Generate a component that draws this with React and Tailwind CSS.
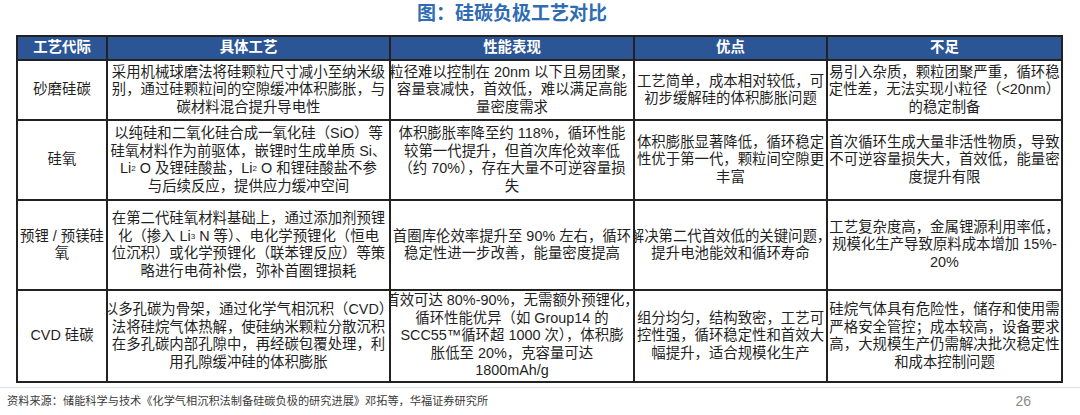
const Li = ({ n }) => (
  <>
    Li<span className="text-[8px] align-[2px]">{n}</span>
  </>
);

const headers = ["工艺代际", "具体工艺", "性能表现", "优点", "不足"];

const rows = [
  {
    h: "h-[58px]",
    cells: [
      ["砂磨硅碳"],
      [
        "采用机械球磨法将硅颗粒尺寸减小至纳米级",
        "别，通过硅颗粒间的空隙缓冲体积膨胀，与",
        "碳材料混合提升导电性",
      ],
      [
        "粒径难以控制在 20nm 以下且易团聚，",
        "容量衰减快，首效低，难以满足高能",
        "量密度需求",
      ],
      ["工艺简单，成本相对较低，可", "初步缓解硅的体积膨胀问题"],
      [
        "易引入杂质，颗粒团聚严重，循环稳",
        "定性差，无法实现小粒径（<20nm）",
        "的稳定制备",
      ],
    ],
  },
  {
    h: "h-[78px]",
    cells: [
      ["硅氧"],
      [
        "以纯硅和二氧化硅合成一氧化硅（SiO）等",
        "硅氧材料作为前驱体，嵌锂时生成单质 Si、",
        <>
          <Li n="2" /> O 及锂硅酸盐，<Li n="2" /> O 和锂硅酸盐不参
        </>,
        "与后续反应，提供应力缓冲空间",
      ],
      [
        "体积膨胀率降至约 118%，循环性能",
        "较第一代提升，但首次库伦效率低",
        "（约 70%），存在大量不可逆容量损",
        "失",
      ],
      ["体积膨胀显著降低，循环稳定", "性优于第一代，颗粒间空隙更", "丰富"],
      [
        "首次循环生成大量非活性物质，导致",
        "不可逆容量损失大，首效低，能量密",
        "度提升有限",
      ],
    ],
  },
  {
    h: "h-[88px]",
    cells: [
      ["预锂 / 预镁硅", "氧"],
      [
        "在第二代硅氧材料基础上，通过添加剂预锂",
        <>
          化（掺入 <Li n="3" /> N 等）、电化学预锂化（恒电
        </>,
        "位沉积）或化学预锂化（联苯锂反应）等策",
        "略进行电荷补偿，弥补首圈锂损耗",
      ],
      ["首圈库伦效率提升至 90% 左右，循环", "稳定性进一步改善，能量密度提高"],
      ["解决第二代首效低的关键问题，", "提升电池能效和循环寿命"],
      [
        "工艺复杂度高，金属锂源利用率低，",
        "规模化生产导致原料成本增加 15%-",
        "20%",
      ],
    ],
  },
  {
    h: "h-[90px]",
    cells: [
      ["CVD 硅碳"],
      [
        "以多孔碳为骨架，通过化学气相沉积（CVD）",
        "法将硅烷气体热解，使硅纳米颗粒分散沉积",
        "在多孔碳内部孔隙中，再经碳包覆处理，利",
        "用孔隙缓冲硅的体积膨胀",
      ],
      [
        "首效可达 80%-90%，无需额外预锂化，",
        "循环性能优异（如 Group14 的",
        "SCC55™循环超 1000 次），体积膨",
        "胀低至 20%，克容量可达",
        "1800mAh/g",
      ],
      ["组分均匀，结构致密，工艺可", "控性强，循环稳定性和首效大", "幅提升，适合规模化生产"],
      [
        "硅烷气体具有危险性，储存和使用需",
        "严格安全管控；成本较高，设备要求",
        "高，大规模生产仍需解决批次稳定性",
        "和成本控制问题",
      ],
    ],
  },
];

const App = () => {
  return (
    <div
      className="w-[1080px] h-[415px] bg-white overflow-hidden text-[#1f1f1f]"
      style={{ fontFamily: '"Liberation Sans", "Noto Sans CJK SC", sans-serif' }}
    >
      <div className="h-[35px] flex justify-center pr-[56px]">
        <span className="text-[19px] leading-[28px] font-bold text-[#2f6cb3]">
          图：硅碳负极工艺对比
        </span>
      </div>

      <div className="ml-[16px] w-[1047px] grid grid-cols-[88px_281px_242px_191px_233px] gap-[2px] border-2 border-[#222] bg-[#222]">
        {headers.map((t) => (
          <div
            key={t}
            className="h-[22px] bg-[#2c5596] text-white font-bold text-[14.4px] flex items-center justify-center"
          >
            {t}
          </div>
        ))}
        {rows.map((row, ri) =>
          row.cells.map((lines, ci) => (
            <div
              key={ri + "-" + ci}
              className={`${row.h} bg-white overflow-hidden flex flex-col items-center justify-center text-[14.4px] leading-[17.5px]`}
            >
              {lines.map((l, li) => (
                <div key={li} className="whitespace-nowrap">
                  {l}
                </div>
              ))}
            </div>
          ))
        )}
      </div>

      <div className="mt-[4px] h-px w-full bg-[#dde4f0]"></div>
      <div className="h-[26px] flex items-center justify-between pl-[7px] pr-[49px]">
        <span className="text-[11.2px] text-[#3a3a3a]">
          资料来源：储能科学与技术《化学气相沉积法制备硅碳负极的研究进展》邓拓等，华福证券研究所
        </span>
        <span className="text-[14px] text-[#8a8a8a]">26</span>
      </div>
    </div>
  );
};

export default App;
